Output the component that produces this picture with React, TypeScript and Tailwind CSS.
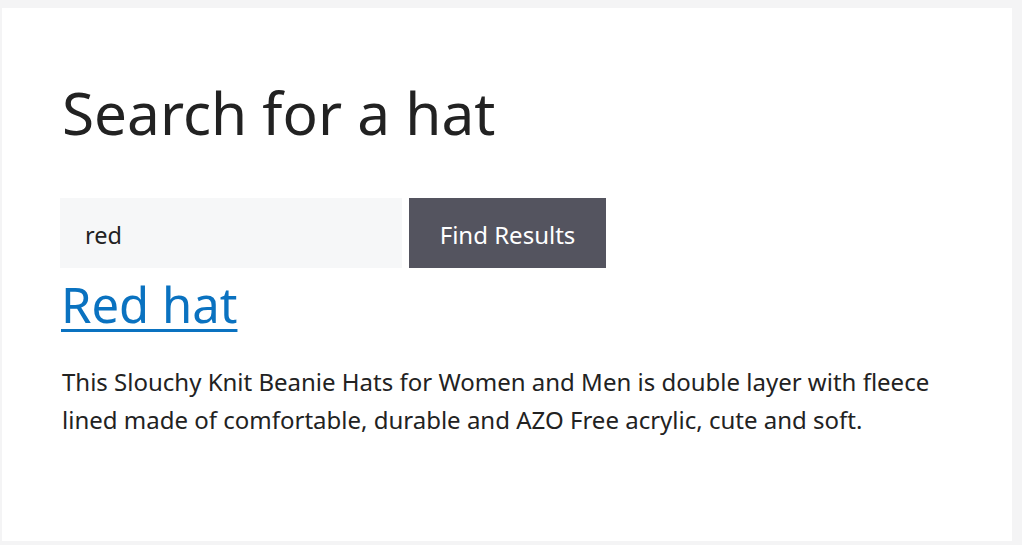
export default function App() {
  return (
    <div
      className="min-h-screen bg-[#f4f4f5] pt-2 pl-[2px] pr-[10px] pb-[4px] flex"
      style={{ fontFamily: '"Noto Sans", "Open Sans", sans-serif' }}
    >
      <div className="flex-1 bg-white pl-[58px] pt-[68px]">
        <h1 className="ml-[2px] text-[58.5px] leading-[72px] text-[#222] font-normal">Search for a hat</h1>
        <form className="mt-[50px] flex gap-[7px]" onSubmit={(e) => e.preventDefault()}>
          <input
            defaultValue="red"
            className="w-[342px] h-[70px] bg-[#f6f7f8] px-[25px] pt-[3px] text-[23.5px] text-[#222] outline-none"
          />
          <button className="h-[70px] w-[197px] bg-[#54545f] pt-[3px] text-white text-[24px]">Find Results</button>
        </form>
        <a href="#" className="ml-[1px] block w-fit text-[49px] leading-[72px] text-[#0a72c0] underline underline-offset-[6px] decoration-[3px]">
          Red hat
        </a>
        <p className="ml-[2px] mt-[23px] text-[24px] leading-[38px] text-[#222] max-w-[900px]">
          This Slouchy Knit Beanie Hats for Women and Men is double layer with fleece lined made of comfortable, durable and AZO Free acrylic, cute and soft.
        </p>
      </div>
    </div>
  );
}
